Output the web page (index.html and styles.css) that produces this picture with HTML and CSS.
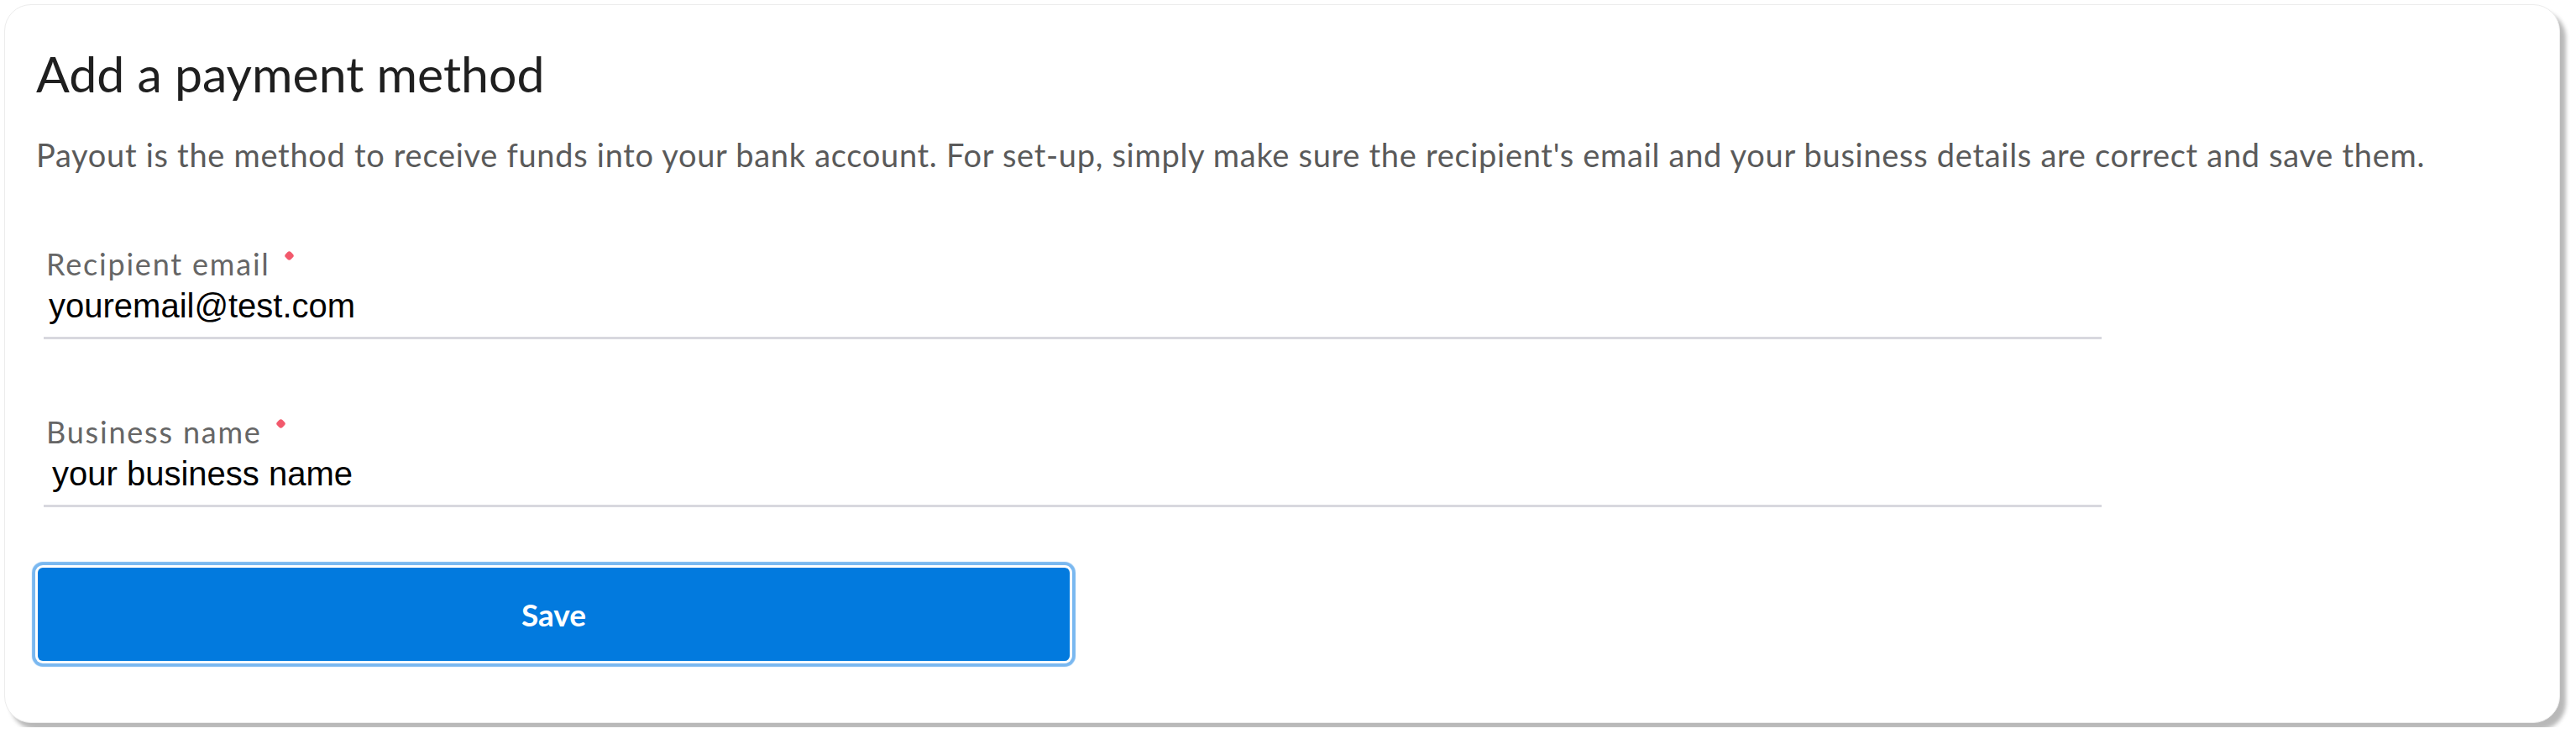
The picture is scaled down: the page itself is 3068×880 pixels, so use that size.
FILE: index.html
```html
<!DOCTYPE html>
<html lang="en">
<head>
<meta charset="utf-8">
<title>Add a payment method</title>
<link rel="stylesheet" href="styles.css">
</head>
<body>
<div class="page">
  <section class="card">
    <h1 class="title">Add a payment method</h1>
    <p class="desc">Payout is the method to receive funds into your bank account. For set-up, simply make sure the recipient's email and your business details are correct and save them.</p>
    <div class="field">
      <div class="label">Recipient email<span class="req"></span></div>
      <div class="value">youremail@test.com</div>
    </div>
    <div class="field field-second">
      <div class="label">Business name<span class="req"></span></div>
      <div class="value value-indent">your business name</div>
    </div>
    <button class="save" type="button">Save</button>
  </section>
</div>
</body>
</html>
```

FILE: styles.css
```css
html, body {
  margin: 0;
  padding: 0;
  background: #ffffff;
}

.page {
  padding: 5px;
  width: 3068px;
  box-sizing: border-box;
}

.card {
  box-sizing: border-box;
  width: 3044px;
  height: 856px;
  background: #ffffff;
  border: 1px solid #ececec;
  border-radius: 32px;
  box-shadow: 7px 8px 5px rgba(0, 0, 0, 0.28);
  padding: 47px 37px 0 37px;
  display: flex;
  flex-direction: column;
  align-items: flex-start;
}

.title {
  margin: 0;
  font-family: Lato, "Open Sans", sans-serif;
  font-weight: 400;
  font-size: 59px;
  line-height: 70px;
  color: #1f1f1f;
}

.desc {
  margin: 39px 0 0 0;
  font-family: Lato, "Open Sans", sans-serif;
  font-size: 38px;
  line-height: 44px;
  letter-spacing: 0.7px;
  color: #5a5a5a;
  white-space: nowrap;
}

.field {
  margin: 89px 0 0 9px;
  width: 2451px;
  border-bottom: 3px solid #d8d8de;
  padding-bottom: 14px;
}

.field-second {
  margin-top: 91px;
}

.label {
  padding-left: 3px;
  font-family: Lato, "Open Sans", sans-serif;
  font-size: 36px;
  line-height: 38px;
  letter-spacing: 1.8px;
  color: #666666;
}

.req {
  display: inline-block;
  width: 9px;
  height: 9px;
  margin-left: 18px;
  background: #f2596c;
  border-radius: 3px;
  transform: rotate(45deg);
  vertical-align: 19px;
}

.value {
  margin-top: 8px;
  padding-left: 6px;
  font-family: "Liberation Sans", Arial, sans-serif;
  font-size: 40px;
  line-height: 46px;
  color: #000000;
}

.value-indent {
  padding-left: 10px;
}

.save {
  margin: 72px 0 0 2px;
  width: 1229px;
  height: 111px;
  border: none;
  border-radius: 6px;
  background: #027ade;
  color: #ffffff;
  font-family: Lato, "Open Sans", sans-serif;
  font-weight: 700;
  font-size: 37px;
  box-shadow: 0 0 0 3px #ffffff, 0 0 1px 7px #7ab8f0;
  cursor: pointer;
}
```
